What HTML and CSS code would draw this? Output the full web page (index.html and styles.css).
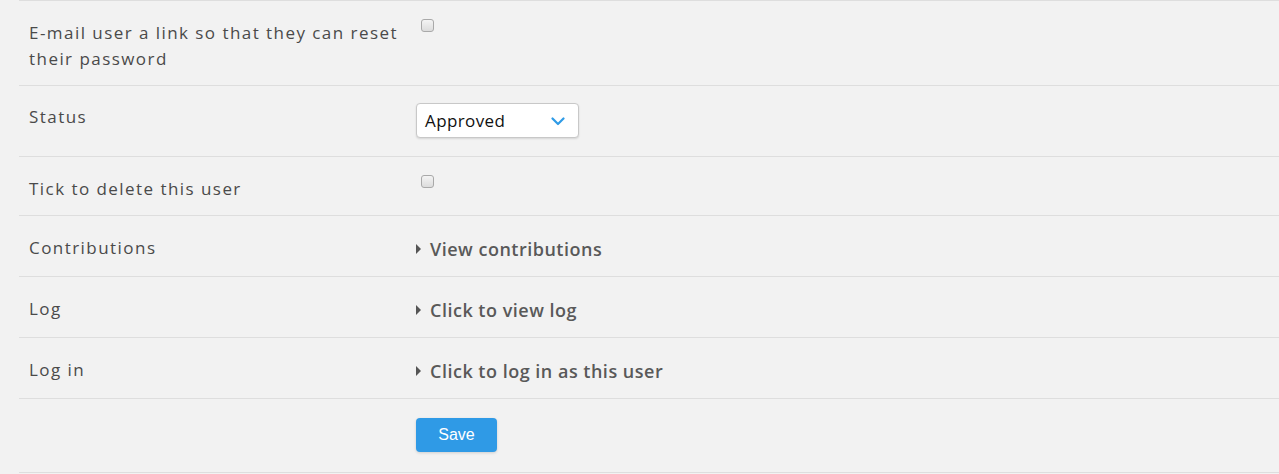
FILE: index.html
```html
<!DOCTYPE html>
<html lang="en">
<head>
<meta charset="utf-8">
<title>Edit user</title>
<link rel="stylesheet" href="styles.css">
</head>
<body>
<form class="user-form">
  <div class="row">
    <div class="label">E-mail user a link so that they can reset their password</div>
    <div class="field"><input type="checkbox" class="check"></div>
  </div>
  <div class="row row-select">
    <div class="label">Status</div>
    <div class="field">
      <div class="select">
        <span>Approved</span>
        <svg class="chev" width="14" height="9" viewBox="0 0 14 9"><path d="M1.5 1.5 L7 7 L12.5 1.5" fill="none" stroke="#2f9be6" stroke-width="2.2" stroke-linecap="round" stroke-linejoin="round"/></svg>
      </div>
    </div>
  </div>
  <div class="row">
    <div class="label">Tick to delete this user</div>
    <div class="field"><input type="checkbox" class="check"></div>
  </div>
  <div class="row">
    <div class="label">Contributions</div>
    <div class="field"><span class="toggle"><span class="tri"></span>View contributions</span></div>
  </div>
  <div class="row">
    <div class="label">Log</div>
    <div class="field"><span class="toggle"><span class="tri"></span>Click to view log</span></div>
  </div>
  <div class="row">
    <div class="label">Log in</div>
    <div class="field"><span class="toggle"><span class="tri"></span>Click to log in as this user</span></div>
  </div>
  <div class="row row-save">
    <div class="label"></div>
    <div class="field"><button type="button" class="save">Save</button></div>
  </div>
</form>
</body>
</html>
```

FILE: styles.css
```css
html, body {
  margin: 0;
  padding: 0;
  background: #f2f2f2;
}
body {
  font-family: "Open Sans", "Liberation Sans", sans-serif;
  color: #4a4a4a;
}
.user-form {
  margin-left: 19px;
  border-top: 1px solid #dedede;
}
.row {
  display: grid;
  grid-template-columns: 397px 1fr;
  align-items: start;
  border-bottom: 1px solid #dedede;
  padding: 18px 0 13px;
}
.label {
  padding: 1px 10px 0;
  font-size: 17px;
  line-height: 26px;
  letter-spacing: 1.45px;
}
.check {
  appearance: none;
  -webkit-appearance: none;
  display: block;
  width: 13px;
  height: 13px;
  margin: 0 0 0 5px;
  border: 1px solid #a9a9a9;
  border-radius: 3px;
  background: linear-gradient(#f4f4f4, #dcdcdc);
  box-sizing: border-box;
}
.row-select { padding-top: 17px; padding-bottom: 18px; }
.select {
  box-sizing: border-box;
  width: 163px;
  height: 35px;
  background: #fff;
  border: 1px solid #c8c8c8;
  border-radius: 4px;
  box-shadow: 0 1px 2px rgba(0,0,0,0.12);
  display: flex;
  align-items: center;
  justify-content: space-between;
  padding: 0 13px 0 8px;
  font-size: 17px;
  letter-spacing: 0.4px;
  color: #111;
}
.chev { display: block; margin-top: 1px; }
.toggle {
  display: inline-flex;
  align-items: center;
  margin-top: 1px;
  font-size: 18px;
  font-weight: 600;
  line-height: 28px;
  letter-spacing: 0.5px;
  color: #595959;
}
.tri {
  width: 0;
  height: 0;
  border-top: 5px solid transparent;
  border-bottom: 5px solid transparent;
  border-left: 5px solid #555;
  margin-right: 9px;
}
.row-save { padding-top: 19px; padding-bottom: 20px; }
.save {
  display: block;
  width: 81px;
  height: 34px;
  border: 0;
  border-radius: 4px;
  background: #2f9ae6;
  color: #fff;
  font-family: "Liberation Sans", Arial, sans-serif;
  font-size: 16px;
  box-shadow: 0 1px 3px rgba(0,0,0,0.15);
  padding: 0;
}
```
